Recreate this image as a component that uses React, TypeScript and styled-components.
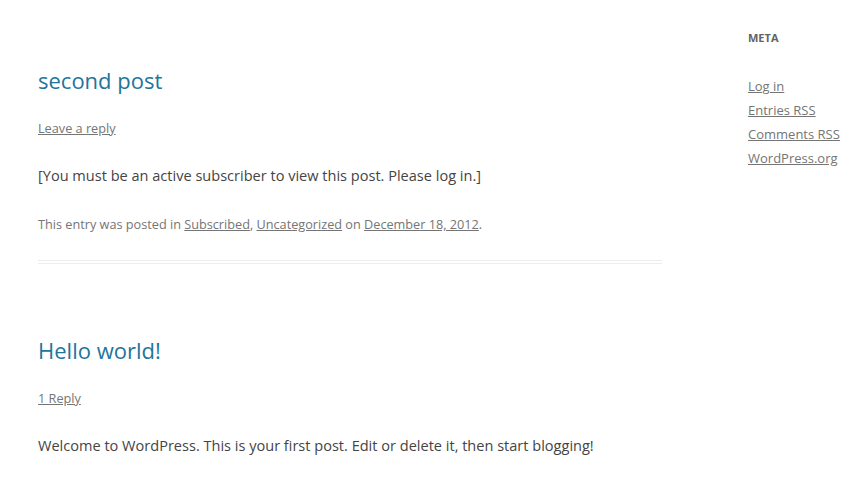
import React from 'react';
import styled, { createGlobalStyle } from 'styled-components';

const GlobalStyle = createGlobalStyle`
  html, body {
    margin: 0;
    padding: 0;
    background: #fff;
    overflow: hidden;
  }
  body {
    font-family: "Open Sans", "Liberation Sans", Arial, sans-serif;
    color: #444;
    font-size: 14px;
    line-height: 24px;
  }
`;

const Page = styled.div`
  display: flex;
  align-items: flex-start;
  gap: 86px;
  padding: 26px 0 0 38px;
  width: 850px;
  height: 477px;
  box-sizing: border-box;
`;

const Main = styled.main`
  width: 624px;
  flex-shrink: 0;
  padding-top: 42px;
`;

const Article = styled.article`
  border-bottom: 4px double #ededed;
  padding-bottom: 24px;
  margin-bottom: 74px;
`;

const Header = styled.header`
  margin-bottom: 23px;
`;

const Title = styled.h1`
  margin: 0;
  font-size: 22px;
  line-height: 24px;
  font-weight: normal;
  color: #21759b;
`;

const CommentsLink = styled.div`
  margin-top: 24px;
  font-size: 12.7px;
  line-height: 24px;
`;

const MetaLink = styled.a`
  color: #757575;
  text-decoration: underline;
`;

const Paragraph = styled.p`
  margin: 0 0 25px;
  font-size: 14.55px;
  line-height: 24px;
  color: #444;
`;

const Footer = styled.footer`
  font-size: 12.7px;
  line-height: 24px;
  color: #757575;
`;

const Sidebar = styled.aside`
  flex: 1;
  min-width: 0;
`;

const WidgetTitle = styled.h3`
  margin: 0 0 24px;
  font-size: 11px;
  line-height: 24px;
  font-weight: bold;
  text-transform: uppercase;
  color: #636363;
`;

const WidgetList = styled.ul`
  list-style: none;
  margin: 0;
  padding: 0;
`;

const WidgetItem = styled.li`
  font-size: 13px;
  line-height: 24px;
  white-space: nowrap;
`;

const metaLinks = ['Log in', 'Entries RSS', 'Comments RSS', 'WordPress.org'];

export default function App() {
  return (
    <>
      <GlobalStyle />
      <Page>
        <Main>
          <Article>
            <Header>
              <Title>second post</Title>
              <CommentsLink>
                <MetaLink href="#">Leave a reply</MetaLink>
              </CommentsLink>
            </Header>
            <Paragraph>[You must be an active subscriber to view this post. Please log in.]</Paragraph>
            <Footer>
              This entry was posted in <MetaLink href="#">Subscribed</MetaLink>,{' '}
              <MetaLink href="#">Uncategorized</MetaLink> on{' '}
              <MetaLink href="#">December 18, 2012</MetaLink>.
            </Footer>
          </Article>
          <article>
            <Header>
              <Title>Hello world!</Title>
              <CommentsLink>
                <MetaLink href="#">1 Reply</MetaLink>
              </CommentsLink>
            </Header>
            <Paragraph>Welcome to WordPress. This is your first post. Edit or delete it, then start blogging!</Paragraph>
          </article>
        </Main>
        <Sidebar>
          <WidgetTitle>Meta</WidgetTitle>
          <WidgetList>
            {metaLinks.map((l) => (
              <WidgetItem key={l}>
                <MetaLink href="#">{l}</MetaLink>
              </WidgetItem>
            ))}
          </WidgetList>
        </Sidebar>
      </Page>
    </>
  );
}
